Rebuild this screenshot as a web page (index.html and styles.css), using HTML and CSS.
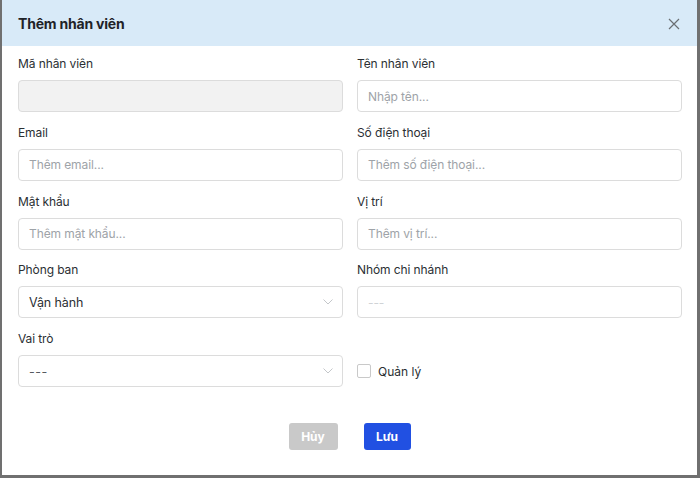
FILE: index.html
```html
<!DOCTYPE html>
<html lang="vi">
<head>
<meta charset="utf-8">
<title>Thêm nhân viên</title>
<link rel="stylesheet" href="styles.css">
</head>
<body>
<div class="backdrop">
  <div class="modal">
    <div class="modal-header">
      <h2 class="modal-title">Thêm nhân viên</h2>
      <button class="close-btn" aria-label="Đóng">
        <svg width="12" height="12" viewBox="0 0 12 12"><path d="M1 1L11 11M11 1L1 11" stroke="#6b6f73" stroke-width="1.2" fill="none"/></svg>
      </button>
    </div>
    <form class="form">
      <div class="field">
        <label class="label">Mã nhân viên</label>
        <div class="input disabled"></div>
      </div>
      <div class="field">
        <label class="label">Tên nhân viên</label>
        <div class="input"><span class="ph">Nhập tên...</span></div>
      </div>
      <div class="field">
        <label class="label">Email</label>
        <div class="input"><span class="ph">Thêm email...</span></div>
      </div>
      <div class="field">
        <label class="label">Số điện thoại</label>
        <div class="input"><span class="ph">Thêm số điện thoại...</span></div>
      </div>
      <div class="field">
        <label class="label">Mật khẩu</label>
        <div class="input"><span class="ph">Thêm mật khẩu...</span></div>
      </div>
      <div class="field">
        <label class="label">Vị trí</label>
        <div class="input"><span class="ph">Thêm vị trí...</span></div>
      </div>
      <div class="field">
        <label class="label">Phòng ban</label>
        <div class="input select"><span class="val">Vận hành</span>
          <svg class="chev" width="10" height="6" viewBox="0 0 10 6"><path d="M0.5 0.5L5 5L9.5 0.5" stroke="#c4c7ca" stroke-width="1" fill="none"/></svg>
        </div>
      </div>
      <div class="field">
        <label class="label">Nhóm chi nhánh</label>
        <div class="input"><span class="ph light">---</span></div>
      </div>
      <div class="field">
        <label class="label">Vai trò</label>
        <div class="input select"><span class="val dash">---</span>
          <svg class="chev" width="10" height="6" viewBox="0 0 10 6"><path d="M0.5 0.5L5 5L9.5 0.5" stroke="#c4c7ca" stroke-width="1" fill="none"/></svg>
        </div>
      </div>
      <div class="field check-field">
        <label class="check"><span class="box"></span><span>Quản lý</span></label>
      </div>
    </form>
    <div class="actions">
      <button class="btn btn-cancel">Hủy</button>
      <button class="btn btn-save">Lưu</button>
    </div>
  </div>
</div>
</body>
</html>
```
FILE: styles.css
```css
* { box-sizing: border-box; }
html, body { margin: 0; padding: 0; }
body {
  width: 700px;
  height: 478px;
  overflow: hidden;
  font-family: "Inter", "Noto Sans", sans-serif;
  background: #707070;
}
.backdrop {
  height: 478px;
  padding: 0 3px 3px 2px;
}
.modal {
  height: 475px;
  background: #fff;
  display: flex;
  flex-direction: column;
}
.modal-header {
  height: 46px;
  flex: none;
  background: #d8eaf8;
  display: flex;
  align-items: center;
  justify-content: space-between;
  padding: 0 16px 0 16px;
}
.modal-title {
  margin: 0;
  font-size: 14px;
  font-weight: 700;
  color: #1f2328;
  letter-spacing: -0.2px;
}
.close-btn {
  border: 0;
  background: none;
  padding: 0;
  width: 14px;
  height: 14px;
  display: flex;
  align-items: center;
  justify-content: center;
  margin-top: 1px;
}
.form {
  display: grid;
  grid-template-columns: 325px 325px;
  column-gap: 14px;
  row-gap: 12.75px;
  padding: 10px 15px 0 16px;
}
.field {
  display: flex;
  flex-direction: column;
  gap: 8px;
}
.label {
  font-size: 12px;
  line-height: 16px;
  color: #2b2f33;
  letter-spacing: -0.1px;
}
.input {
  height: 32px;
  border: 1px solid #dcdcdc;
  border-radius: 4px;
  background: #fff;
  display: flex;
  align-items: center;
  padding: 0 10px;
  font-size: 12px;
  letter-spacing: -0.1px;
}
.input.disabled { background: #f2f2f2; }
.ph { color: #9ea3a8; }
.ph.light { color: #d0d3d6; }
.val { color: #2b2f33; font-size: 12.5px; }
.val.dash { color: #555a5f; letter-spacing: 0.5px; }
.select { justify-content: space-between; padding-right: 9px; }
.chev { flex: none; }
.check-field {
  justify-content: flex-end;
}
.check {
  height: 32px;
  display: flex;
  align-items: center;
  gap: 7px;
  font-size: 12px;
  color: #2b2f33;
}
.box {
  width: 14px;
  height: 14px;
  border: 1px solid #c9c9c9;
  border-radius: 2px;
  background: #fff;
}
.actions {
  display: flex;
  justify-content: center;
  gap: 26px;
  margin-top: 36px;
}
.btn {
  height: 27px;
  border: 0;
  border-radius: 3px;
  color: #fff;
  font-family: inherit;
  font-size: 12px;
  font-weight: 700;
  padding: 0;
}
.btn-cancel { width: 49px; background: #c9c9c9; }
.btn-save { width: 47px; background: #2150e2; }
```
